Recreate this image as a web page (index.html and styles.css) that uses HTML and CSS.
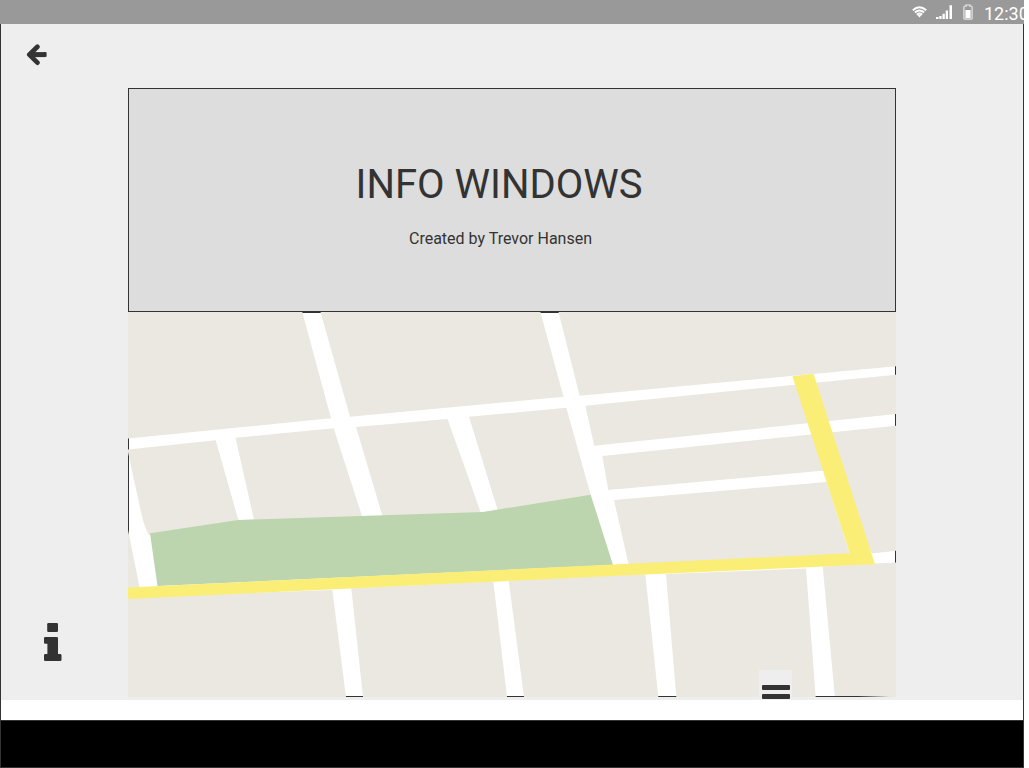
FILE: index.html
```html
<!DOCTYPE html>
<html lang="en">
<head>
<meta charset="utf-8">
<title>Info Windows</title>
<link rel="stylesheet" href="styles.css">
</head>
<body>
<div class="device">
  <header class="status-bar">
    <svg class="wifi" width="16" height="12" viewBox="0 0 16 12" fill="none" stroke="#fff" stroke-width="1.900">
      <path d="M.8 4.200Q7.500-1.900 14.200 4.200M2.900 6.500Q7.500 2.500 12.100 6.500M4.900 8.700Q7.500 6.500 10.100 8.700"/>
      <path d="M5.600 9.300Q7.500 8 9.400 9.300L7.500 11.500z" fill="#fff" stroke="none"/>
    </svg>
    <svg class="signal" width="17" height="14" viewBox="0 0 17 14" fill="#fff">
      <path d="M0 12h2.500v2H0zM3.300 11h2.300v3H3.300zM6.500 8.800h2.300V14H6.500zM9.700 5.500H12V14H9.700zM13.500.3H16V14h-2.500z"/>
    </svg>
    <svg class="battery" width="10" height="16" viewBox="0 0 10 16">
      <path d="M3 1h4v1.200h1.200q.9 0 .9.900v11.100q0 .9-.9.900H1.800q-.9 0-.9-.9V3.100q0-.9.900-.9H3z" fill="none" stroke="#d4d4d4" stroke-width="1.600"/>
      <path d="M2.400 6h5.200v8H2.400z" fill="#fff"/>
    </svg>
    <span class="clock">12:30</span>
  </header>
  <main class="screen">
    <aside class="rail">
      <svg class="back" width="22" height="22" viewBox="0 0 22 22" fill="none" stroke="#333" stroke-width="4.700" stroke-linejoin="round">
        <path d="M11.400 2.800L3.300 10.700l8.100 8" stroke-linecap="round"/>
        <path d="M4 10.600H18.800" stroke-width="5"/>
        <path d="M17.600 8.100h2q1 0 1 1v3q0 1-1 1h-2z" fill="#333" stroke="none"/>
      </svg>
      <svg class="info" width="18" height="38" viewBox="0 0 18 38" fill="#333">
        <rect x="3.200" y="0" width="10.800" height="9" rx="1.300"/>
        <path d="M1.300 14H12.700Q14 14 14 15.300V31H16.200Q17.500 31 17.500 32.300V36.700Q17.500 38 16.200 38H1.300Q0 38 0 36.700V32.300Q0 31 1.300 31H3.400V20.800H1.300Q0 20.800 0 19.500V15.300Q0 14 1.300 14z"/>
      </svg>
    </aside>
    <section class="content">
      <div class="hero">
        <h1 class="title">INFO WINDOWS</h1>
        <p class="author">Created by Trevor Hansen</p>
      </div>
      <div class="map">
        <svg class="streets" width="768" height="385" viewBox="128 312 768 385">
          <rect x="128.500" y="312.500" width="767" height="384" fill="#fff" stroke="#333"/>
          <g fill="#ebe8e1">
            <path d="M128 312H302.300L331 418.300L128 438.500z"/>
            <path d="M320.500 312H540.400L563.500 396.700L350 416.700z"/>
            <path d="M558.500 312H896V366.300L579.700 395.700z"/>
            <path d="M128 449.500L215.700 440.300L238.500 520.500L149 535Q145 529 141.700 515L134 480L128 452z"/>
            <path d="M235.500 437.700L333.700 428.300L362.300 517L254.300 521z"/>
            <path d="M356 427L447.500 419L481 513L382.500 516z"/>
            <path d="M469 416.800L566.300 407.700L591 496L498 511z"/>
            <path d="M585.300 405.700L896 374.700V414L594.300 445.800z"/>
            <path d="M602.300 456L896 425.700V550.700L872 553.500L830 470L608.300 490z"/>
            <path d="M614 500L826.700 482L850 555L628.700 565z"/>
            <path d="M128 530L139.700 588H128z"/>
            <path d="M128 597L332.300 590L346 697H128z"/>
            <path d="M351.300 588.300L493.300 581.500L507 697H363z"/>
            <path d="M508.700 580.500L645.300 574L658.300 697H524z"/>
            <path d="M666 574L806 568.500L815.700 697H676.300z"/>
            <path d="M822.700 566.500L875 563.500L896 562.500V697.200L858 696H834.800z"/>
          </g>
          <path d="M150 533.200L238.300 519.900L482.500 512L590.700 494.700L613 565L157.500 586z" fill="#bcd5ae"/>
          <path d="M128 587.500L849.700 553.300L792.300 376.200L813.500 373.700L875 564.300L640 574.800L128 599z" fill="#faee77"/>
        </svg>
        <button class="menu" type="button" aria-label="Menu">
          <span class="bar"></span>
          <span class="bar"></span>
        </button>
      </div>
    </section>
  </main>
  <footer class="nav-bar"></footer>
</div>
</body>
</html>
```

FILE: styles.css
```css
* {
  box-sizing: border-box;
}

body {
  margin: 0;
  background: #fff;
  color: #333;
  font-family: Roboto, sans-serif;
}

.device {
  display: flex;
  flex-direction: column;
  width: 1024px;
  height: 768px;
  overflow: hidden;
}

.status-bar {
  display: flex;
  height: 24px;
  padding-left: 912px;
  background: #999;
  color: #fff;
  overflow: hidden;
}

.status-bar svg {
  flex: none;
}

.wifi {
  margin-top: 6px;
}

.signal {
  margin: 5px 0 0 8px;
}

.battery {
  margin: 4px 0 0 10px;
}

.clock {
  margin-left: 11px;
  padding-top: 3px;
  font-size: 18px;
  line-height: 21px;
}

.screen {
  display: flex;
  height: 676px;
  background: #eee;
  border: solid #333;
  border-width: 0 1px;
}

.rail {
  display: flex;
  flex-direction: column;
  justify-content: space-between;
  align-items: flex-start;
  width: 127px;
  padding: 20px 0 39px 25px;
}

.info {
  margin-left: 18px;
}

.content {
  width: 768px;
  padding-top: 64px;
}

.hero {
  height: 224px;
  padding: 72px 24px 0 0;
  border: 1px solid #333;
  background: #ddd;
  text-align: center;
}

.title {
  margin: 0;
  padding-right: 2px;
  font-size: 40px;
  font-weight: 400;
  line-height: 47px;
}

.author {
  margin: 21px 0 0;
  padding-left: 1px;
  font-size: 16px;
  line-height: 19px;
}

.map {
  position: relative;
  height: 388px;
}

.streets {
  display: block;
}

.menu {
  position: absolute;
  left: 631px;
  bottom: 0;
  display: flex;
  flex-direction: column;
  gap: 4px;
  width: 33px;
  height: 30px;
  padding: 15px 2px 0 3px;
  border: 0;
  background: #eee;
}

.bar {
  width: 28px;
  height: 5px;
  border-radius: 1px;
  background: #333;
}

.nav-bar {
  height: 68px;
  border: 1px solid #333;
  border-top: 0;
  background: linear-gradient(#fff 20px, #333 20px, #333 21px, #000 21px);
}
```
